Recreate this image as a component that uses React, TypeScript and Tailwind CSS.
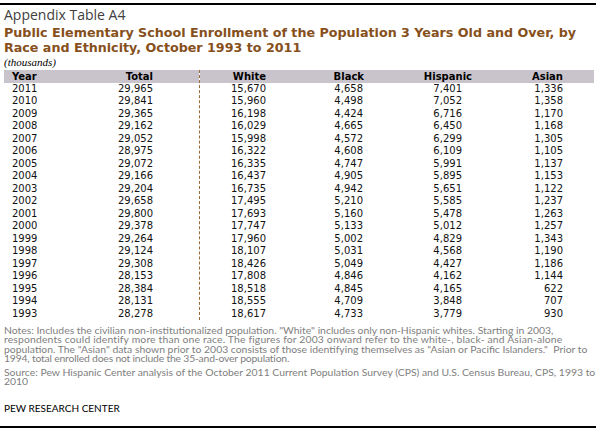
const rows = [
  ["2011", "29,965", "15,670", "4,658", "7,401", "1,336"],
  ["2010", "29,841", "15,960", "4,498", "7,052", "1,358"],
  ["2009", "29,365", "16,198", "4,424", "6,716", "1,170"],
  ["2008", "29,162", "16,029", "4,665", "6,450", "1,168"],
  ["2007", "29,052", "15,998", "4,572", "6,299", "1,305"],
  ["2006", "28,975", "16,322", "4,608", "6,109", "1,105"],
  ["2005", "29,072", "16,335", "4,747", "5,991", "1,137"],
  ["2004", "29,166", "16,437", "4,905", "5,895", "1,153"],
  ["2003", "29,204", "16,735", "4,942", "5,651", "1,122"],
  ["2002", "29,658", "17,495", "5,210", "5,585", "1,237"],
  ["2001", "29,800", "17,693", "5,160", "5,478", "1,263"],
  ["2000", "29,378", "17,747", "5,133", "5,012", "1,257"],
  ["1999", "29,264", "17,960", "5,002", "4,829", "1,343"],
  ["1998", "29,124", "18,107", "5,031", "4,568", "1,190"],
  ["1997", "29,308", "18,426", "5,049", "4,427", "1,186"],
  ["1996", "28,153", "17,808", "4,846", "4,162", "1,144"],
  ["1995", "28,384", "18,518", "4,845", "4,165", "622"],
  ["1994", "28,131", "18,555", "4,709", "3,848", "707"],
  ["1993", "28,278", "18,617", "4,733", "3,779", "930"],
];

// per column: width, header classes, cell classes
const columns = [
  { label: "Year", col: "w-[96px]", head: "pl-[8px] text-left", cell: "pl-[8px] text-left" },
  { label: "Total", col: "w-[100px] border-r border-dashed border-[#9a6a38]", head: "pr-[46px] text-right", cell: "pr-[46px] text-right" },
  { label: "White", col: "w-[90px]", head: "pr-[24px] text-right", cell: "pr-[24px] text-right" },
  { label: "Black", col: "w-[100px]", head: "pr-[26px] text-right", cell: "pr-[27px] text-right" },
  { label: "Hispanic", col: "w-[100px]", head: "pr-[18px] text-right", cell: "pr-[28px] text-right" },
  { label: "Asian", col: "w-[104px]", head: "pr-[31px] text-right", cell: "pr-[31px] text-right" },
];

// note lines broken as in the original, each with its own spacing
const notes = [
  { text: 'Notes: Includes the civilian non-institutionalized population. "White" includes only non-Hispanic whites. Starting in 2003,', cls: "tracking-normal" },
  { text: "respondents could identify more than one race. The figures for 2003 onward refer to the white-, black- and Asian-alone", cls: "tracking-[0.15px]" },
  { text: 'population. The "Asian" data shown prior to 2003 consists of those identifying themselves as "Asian or Pacific Islanders."  Prior to', cls: "tracking-normal" },
  { text: "1994, total enrolled does not include the 35-and-over population.", cls: "tracking-[-0.2px]" },
];

const App = () => {
  return (
    <div className="w-[601px] h-[432px] bg-white overflow-hidden flex flex-col">
      <div className="mt-[3px] h-[1.5px] w-[596px] bg-black" />

      <div className="pl-[4px] mt-[1px] text-[14px] leading-[17px] text-[#404040] font-['Open_Sans',sans-serif]">
        Appendix Table A4
      </div>

      <h1 className="pl-[4px] mt-[2px] text-[12.7px] leading-[15px] font-bold text-[#86501c] font-['DejaVu_Sans',Verdana,sans-serif]">
        Public Elementary School Enrollment of the Population 3 Years Old and Over, by
        <br />
        Race and Ethnicity, October 1993 to 2011
      </h1>

      <div className="pl-[4px] mt-[1px] text-[11px] leading-[13px] italic text-black font-['Liberation_Serif',serif]">
        (thousands)
      </div>

      {/* Table */}
      <div className="ml-[4px] mt-[1px] flex font-['DejaVu_Sans',Verdana,sans-serif] text-[10px] text-[#111]">
        {columns.map((c, ci) => (
          <div key={c.label} className={`flex flex-col ${c.col}`}>
            <div className={`h-[13px] leading-[13px] bg-[#c9c4cc] font-bold text-black ${c.head}`}>{c.label}</div>
            {rows.map((r) => (
              <div key={r[0]} className={`h-[12.5px] leading-[12.5px] whitespace-nowrap ${c.cell}`}>
                {r[ci]}
              </div>
            ))}
          </div>
        ))}
      </div>

      {/* Notes */}
      <div className="pl-[4px] mt-[6px] text-[10.4px] leading-[9.4px] text-[#808080] font-['Lato',sans-serif]">
        {notes.map((n) => (
          <div key={n.text} className={`whitespace-pre ${n.cls}`}>{n.text}</div>
        ))}
      </div>

      <div className="pl-[4px] mt-[4px] text-[10.4px] leading-[9.4px] text-[#808080] font-['Lato',sans-serif]">
        <div className="whitespace-nowrap">
          Source: Pew Hispanic Center analysis of the October 2011 Current Population Survey (CPS) and U.S. Census Bureau, CPS, 1993 to
        </div>
        <div>2010</div>
      </div>

      <div className="pl-[4px] mt-[16px] text-[10px] leading-[12px] text-black font-['Lato',sans-serif]">
        PEW RESEARCH CENTER
      </div>

      <div className="mt-auto mb-[4px] h-[2px] w-[596px] bg-black" />
    </div>
  );
};

export default App;
